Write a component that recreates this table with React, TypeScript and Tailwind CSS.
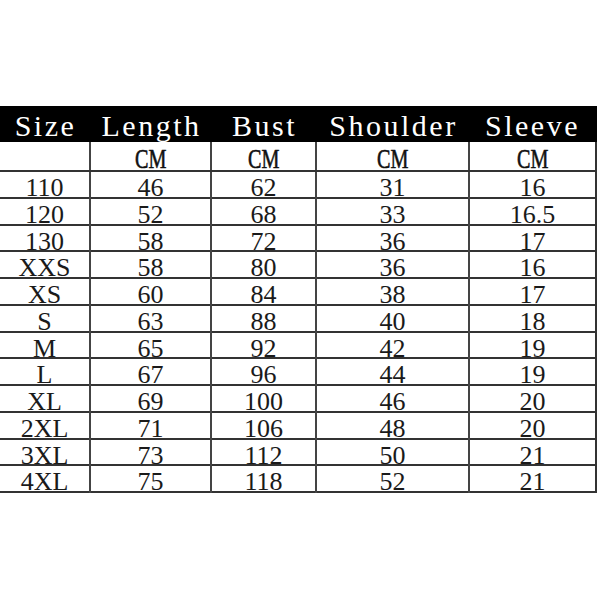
import React from "react";

const HEADERS = ["Size", "Length", "Bust", "Shoulder", "Sleeve"];

const ROWS: string[][] = [
  ["110", "46", "62", "31", "16"],
  ["120", "52", "68", "33", "16.5"],
  ["130", "58", "72", "36", "17"],
  ["XXS", "58", "80", "36", "16"],
  ["XS", "60", "84", "38", "17"],
  ["S", "63", "88", "40", "18"],
  ["M", "65", "92", "42", "19"],
  ["L", "67", "96", "44", "19"],
  ["XL", "69", "100", "46", "20"],
  ["2XL", "71", "106", "48", "20"],
  ["3XL", "73", "112", "50", "21"],
  ["4XL", "75", "118", "52", "21"],
];

const COLS = "grid grid-cols-[91px_121px_105px_153px_125px]";

export default function App() {
  return (
    <div className="w-[600px] h-[600px] bg-white pt-[106px]">
      <div className="w-[597px]">
        {/* header bar */}
        <div className={`${COLS} h-[36px] bg-black text-white`}>
          {HEADERS.map((h) => (
            <div
              key={h}
              className="flex items-center justify-center font-[family-name:'Liberation_Serif',serif] text-[30px] tracking-[2.5px] leading-[28px]"
            >
              <span className="pt-[3px]">{h}</span>
            </div>
          ))}
        </div>

        <div className="border-r-2 border-[#333] w-[597px]">
          {/* unit row */}
          <div className={`${COLS} h-[30px] border-b-2 border-[#333]`}>
            {HEADERS.map((h, i) => (
              <div
                key={h}
                className={`flex items-center justify-center ${i < 4 ? "border-r-2 border-[#444]" : ""}`}
              >
                {i > 0 ? (
                  <span className="inline-block scale-x-[0.72] [-webkit-text-stroke:0.6px_#111] font-[family-name:'Liberation_Serif',serif] text-[28px] leading-[22px] text-[#111] pt-[5px]">
                    CM
                  </span>
                ) : null}
              </div>
            ))}
          </div>

          {ROWS.map((row) => (
            <div key={row[0]} className={`${COLS} h-[26.75px] border-b-2 border-[#333]`}>
              {row.map((v, i) => (
                <div
                  key={i}
                  className={`flex items-center justify-center font-[family-name:'Liberation_Serif',serif] text-[26px] leading-[22px] text-[#1a1a1a] ${
                    i < 4 ? "border-r-2 border-[#444]" : ""
                  }`}
                >
                  <span className="pt-[5px]">{v}</span>
                </div>
              ))}
            </div>
          ))}
        </div>
      </div>
    </div>
  );
}
